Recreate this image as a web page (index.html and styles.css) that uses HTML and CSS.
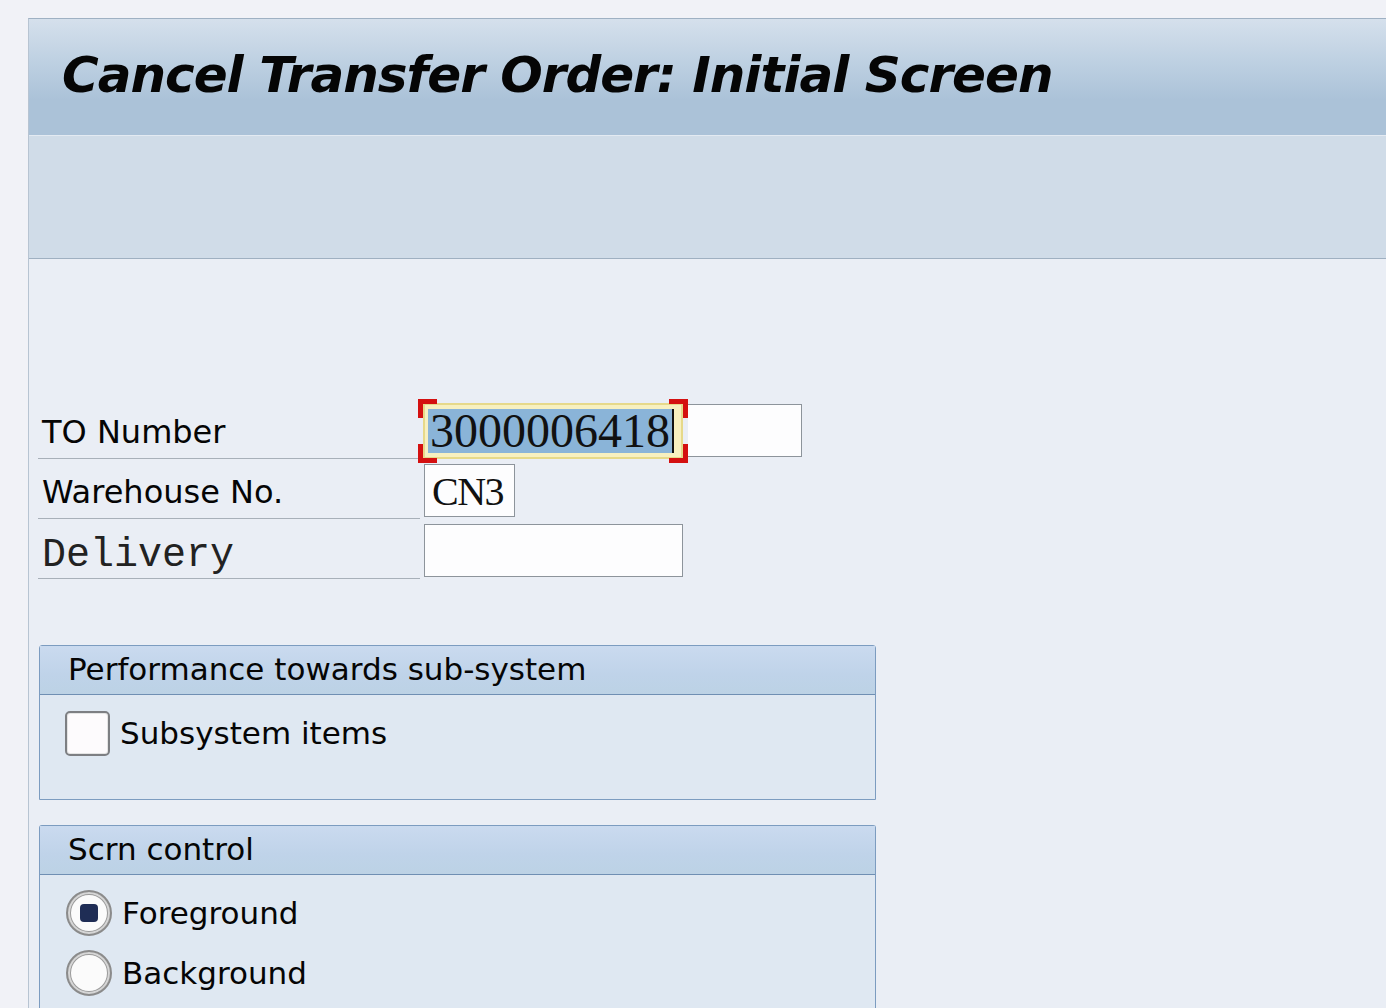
FILE: index.html
```html
<!DOCTYPE html>
<html>
<head>
<meta charset="utf-8">
<link rel="stylesheet" href="styles.css">
</head>
<body>
<div class="window">
  <div class="titlebar"><h1 class="title">Cancel Transfer Order: Initial Screen</h1></div>
  <div class="toolbar"></div>
  <div class="content">
    <div class="form">
      <div class="row">
        <div class="label">TO Number</div>
        <div class="field">
          <div class="focus">
            <span class="br tl"></span><span class="br tr"></span><span class="br bl"></span><span class="br br2"></span>
            <div class="focus-inner"><span class="sel">3000006418</span><span class="caret"></span></div>
          </div>
          <div class="ext"></div>
        </div>
      </div>
      <div class="row">
        <div class="label">Warehouse No.</div>
        <div class="field"><div class="box cn">CN3</div></div>
      </div>
      <div class="row">
        <div class="label mono">Delivery</div>
        <div class="field"><div class="box del"></div></div>
      </div>
    </div>

    <div class="group g1">
      <div class="ghead">Performance towards sub-system</div>
      <div class="gbody">
        <div class="opt"><span class="check"></span><span class="otext">Subsystem items</span></div>
      </div>
    </div>

    <div class="group g2">
      <div class="ghead">Scrn control</div>
      <div class="gbody">
        <div class="opt"><span class="radio on"><span class="dot"></span></span><span class="otext">Foreground</span></div>
        <div class="opt"><span class="radio"></span><span class="otext">Background</span></div>
      </div>
    </div>
  </div>
</div>
</body>
</html>
```
FILE: styles.css
```css
html, body {
  margin: 0;
  padding: 0;
  height: 100%;
  overflow: hidden;
}
body {
  background: #f1f2f7;
  font-family: "DejaVu Sans", Tahoma, sans-serif;
}
.window {
  margin: 18px 0 0 28px;
  border-left: 1px solid #b7c4d2;
  border-top: 1px solid #9fb1c3;
  height: 990px;
  display: flex;
  flex-direction: column;
}
.titlebar {
  flex-shrink: 0;
  height: 116px;
  background: linear-gradient(to bottom, #d5e0ec 0%, #bccfe1 40%, #abc2d8 70%, #abc2d8 100%);
  display: flex;
  align-items: center;
}
.title {
  margin: 0 0 0 33px;
  font-family: "DejaVu Sans", Verdana, sans-serif;
  font-weight: bold;
  font-style: italic;
  font-size: 50px;
  letter-spacing: -1px;
  color: #050505;
  padding-bottom: 4px;
}
.toolbar {
  flex-shrink: 0;
  height: 122px;
  background: #d0dce8;
  border-top: 1px solid #e3eaf2;
  border-bottom: 1px solid #9fb0c1;
}
.content {
  flex: 1;
  min-height: 0;
  background: #eaeef5;
  padding: 140px 0 0 9px;
}
.form {
  display: flex;
  flex-direction: column;
}
.row {
  display: flex;
  height: 60px;
}
.label {
  width: 382px;
  border-bottom: 1px solid #a8b0b9;
  box-sizing: border-box;
  padding: 13px 0 0 4px;
  font-size: 32px;
  color: #050505;
  line-height: 40px;
}
.label.mono {
  font-family: "Liberation Mono", "Courier New", monospace;
  font-size: 40px;
  padding-top: 17px;
  color: #222;
}
.field {
  display: flex;
  align-items: flex-start;
  position: relative;
}
.focus {
  position: relative;
  margin-left: -2px;
  width: 270px;
  height: 64px;
  box-sizing: border-box;
  padding: 4px 5px;
}
.focus-inner {
  height: 56px;
  box-sizing: border-box;
  border: 2px solid #e6d98a;
  background: #f7f0c0;
  padding: 3px 3px;
  display: flex;
  align-items: center;
}
.sel {
  background: #8ab4d8;
  font-family: "Liberation Serif", "Times New Roman", serif;
  font-size: 48px;
  line-height: 44px;
  color: #111;
  padding: 0 2px 0 2px;
}
.caret {
  display: inline-block;
  width: 2px;
  height: 44px;
  background: #111;
}
.br {
  position: absolute;
  width: 14px;
  height: 14px;
  border-color: #d41010;
  border-style: solid;
  border-width: 0;
}
.br.tl { left: 0; top: 0; border-left-width: 5px; border-top-width: 5px; }
.br.tr { right: 0; top: 0; border-right-width: 5px; border-top-width: 5px; }
.br.bl { left: 0; bottom: 0; border-left-width: 5px; border-bottom-width: 5px; }
.br2 { right: 0; bottom: 0; border-right-width: 5px; border-bottom-width: 5px; }
.ext {
  margin-top: 5px;
  width: 114px;
  height: 53px;
  box-sizing: border-box;
  background: #fdfdfe;
  border: 1px solid #8d949b;
  border-left: none;
}
.box {
  margin-left: 4px;
  margin-top: 5px;
  height: 53px;
  box-sizing: border-box;
  background: #fdfdfe;
  border: 1px solid #8d949b;
  font-family: "Liberation Serif", "Times New Roman", serif;
  font-size: 40px;
  line-height: 54px;
  padding-left: 7px;
  color: #111;
}
.box.cn { width: 91px; letter-spacing: -1.5px; }
.box.del { margin-top: 5px; width: 259px; }
.group {
  width: 837px;
  margin-left: 1px;
  border: 1px solid #7c9cc0;
  border-radius: 3px 3px 0 0;
  box-sizing: border-box;
}
.g1 { margin-top: 66px; height: 155px; }
.g2 { margin-top: 25px; height: 200px; border-bottom: none; }
.ghead {
  height: 49px;
  box-sizing: border-box;
  border-bottom: 1px solid #6f8fb3;
  background: linear-gradient(to bottom, #cadaef 0%, #bfd3e9 60%, #bcd2e5 100%);
  font-size: 31px;
  line-height: 46px;
  padding-left: 28px;
  color: #050505;
}
.gbody {
  background: #dfe8f2;
  height: calc(100% - 49px);
  padding: 13px 0 0 25px;
  box-sizing: border-box;
}
.g2 .gbody { padding-top: 8px; }
.opt {
  display: flex;
  align-items: center;
  height: 60px;
}
.g1 .opt { height: 50px; }
.check {
  width: 45px;
  height: 45px;
  box-sizing: border-box;
  border: 2px solid #7d7f83;
  border-radius: 5px;
  background: #fdfbfd;
  box-shadow: inset 0 0 0 1px #e4e4e4;
  margin-right: 10px;
}
.radio {
  width: 46px;
  height: 46px;
  box-sizing: border-box;
  border-radius: 50%;
  border: 2px solid #8b8b8b;
  background: #fbfbfb;
  box-shadow: inset 0 0 0 2px #d6d6d6, inset 0 0 0 3px #9a9a9a;
  margin-left: 1px;
  margin-right: 10px;
  display: flex;
  align-items: center;
  justify-content: center;
}
.dot {
  width: 18px;
  height: 18px;
  border-radius: 4px;
  background: #1f2d55;
}
.otext {
  font-size: 31px;
  color: #050505;
}
```
